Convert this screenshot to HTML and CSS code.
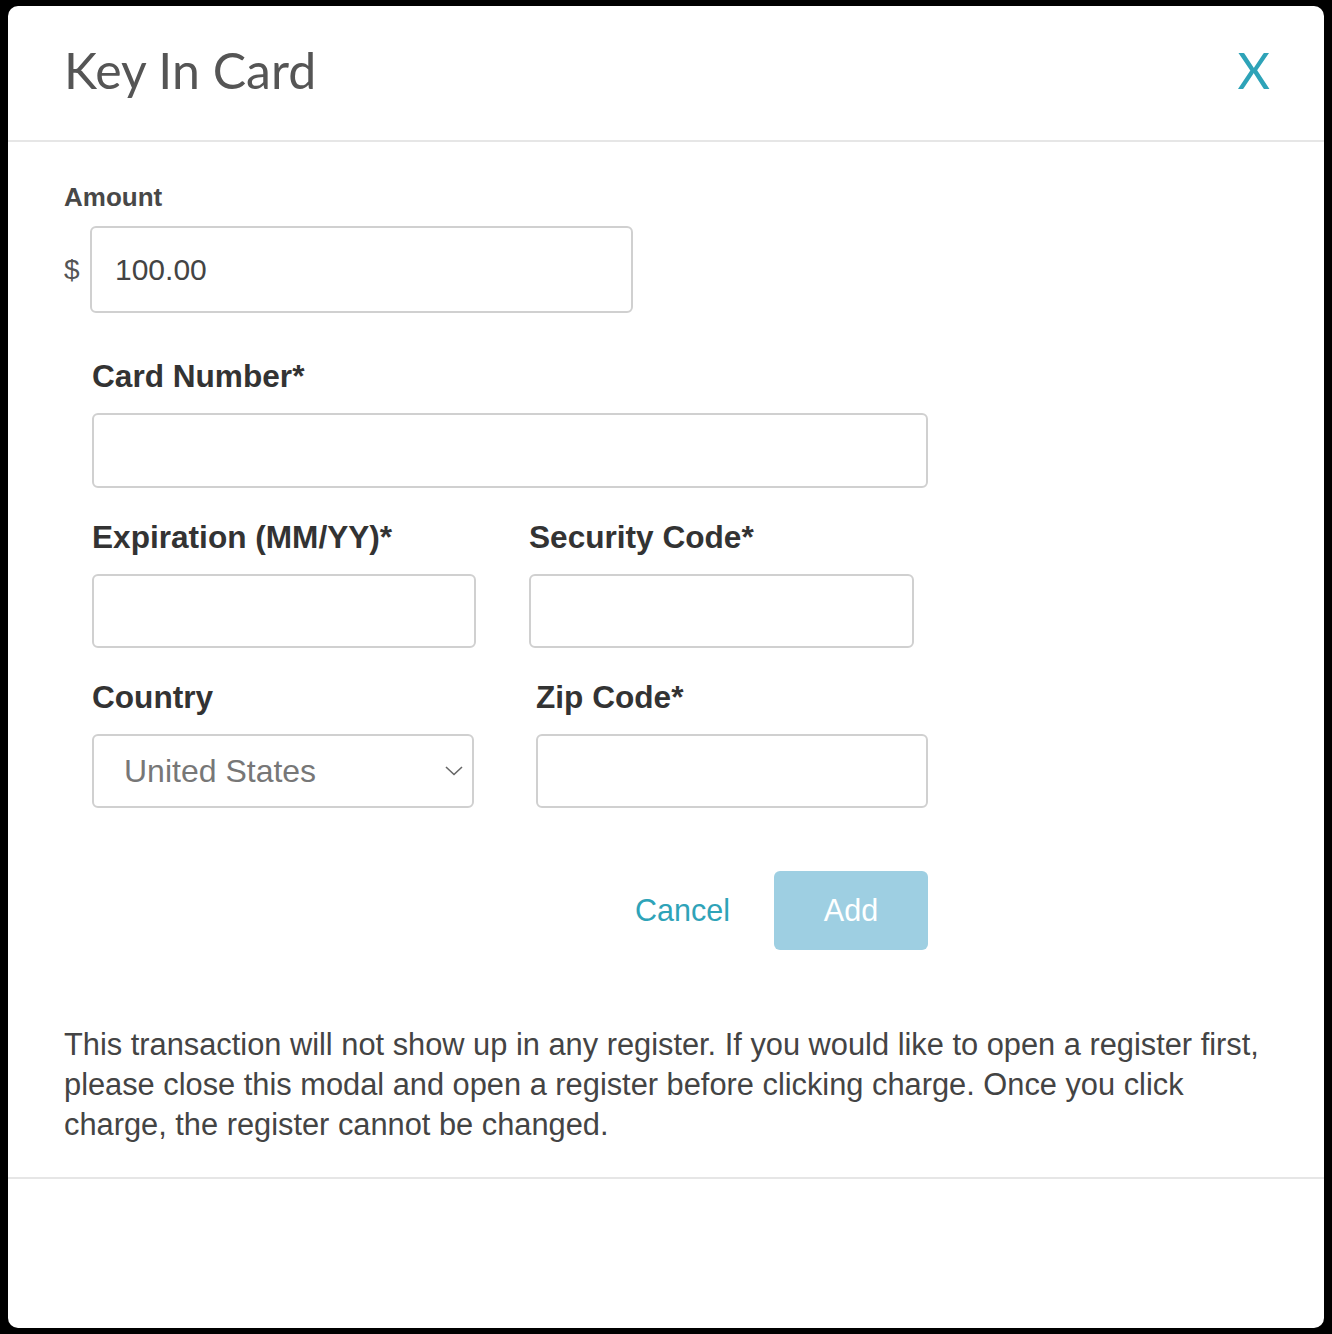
FILE: index.html
```html
<!DOCTYPE html>
<html>
<head>
<meta charset="utf-8">
<link rel="stylesheet" href="styles.css">
</head>
<body>
<div class="modal">
  <div class="modal-header">
    <h1 class="title">Key In Card</h1>
    <span class="close">X</span>
  </div>
  <div class="modal-body">
    <div class="amount-label">Amount</div>
    <div class="amount-row">
      <span class="dollar">$</span>
      <div class="input amount-input">100.00</div>
    </div>
    <div class="card-form">
      <div class="field">
        <div class="label">Card Number*</div>
        <div class="input card-input"></div>
      </div>
      <div class="row">
        <div class="field exp">
          <div class="label">Expiration (MM/YY)*</div>
          <div class="input exp-input"></div>
        </div>
        <div class="field sec">
          <div class="label">Security Code*</div>
          <div class="input sec-input"></div>
        </div>
      </div>
      <div class="row">
        <div class="field country">
          <div class="label">Country</div>
          <div class="input select">
            <span>United States</span>
            <svg class="chev" width="18" height="10" viewBox="0 0 18 10"><path d="M1 1 L9 8.5 L17 1" fill="none" stroke="#666" stroke-width="1.6"/></svg>
          </div>
        </div>
        <div class="field zip">
          <div class="label">Zip Code*</div>
          <div class="input zip-input"></div>
        </div>
      </div>
      <div class="actions">
        <span class="cancel">Cancel</span>
        <span class="add">Add</span>
      </div>
    </div>
    <p class="note">This transaction will not show up in any register. If you would like to open a register first, please close this modal and open a register before clicking charge. Once you click charge, the register cannot be changed.</p>
  </div>
</div>
</body>
</html>
```
FILE: styles.css
```css
html, body {
  margin: 0;
  padding: 0;
  background: #000;
}
body {
  padding: 6px 8px 6px 8px;
  font-family: "Liberation Sans", Arial, sans-serif;
}
.modal {
  background: #fff;
  border-radius: 10px;
  height: 1322px;
  overflow: hidden;
}
.modal-header {
  box-sizing: border-box;
  height: 136px;
  border-bottom: 2px solid #e6e6e6;
  display: flex;
  align-items: center;
  justify-content: space-between;
  padding: 0 54px 6px 56px;
}
.title {
  margin: 0;
  font-family: Lato, sans-serif;
  font-weight: 400;
  font-size: 50px;
  color: #555;
}
.close {
  font-family: Lato, sans-serif;
  font-size: 50px;
  color: #2ea3b8;
}
.modal-body {
  padding: 40px 56px 0 56px;
  border-bottom: 2px solid #e6e6e6;
}
.amount-label {
  font-size: 26px;
  font-weight: bold;
  color: #484848;
  height: 30px;
  line-height: 30px;
}
.amount-row {
  display: flex;
  align-items: center;
  margin-top: 14px;
}
.dollar {
  font-size: 28px;
  color: #555;
  width: 26px;
}
.input {
  box-sizing: border-box;
  border: 2px solid #d0d0d0;
  border-radius: 6px;
  background: #fff;
}
.amount-input {
  width: 543px;
  height: 87px;
  display: flex;
  align-items: center;
  padding-left: 23px;
  font-size: 30px;
  color: #444;
}
.card-form {
  padding-left: 28px;
  width: 836px;
  margin-top: 45px;
}
.label {
  font-size: 31.6px;
  font-weight: bold;
  color: #333;
  height: 36px;
  line-height: 36px;
}
.field .input {
  margin-top: 19px;
  height: 75px;
}
.row .field .input {
  height: 74px;
}
.card-input {
  width: 836px;
}
.row {
  display: flex;
  margin-top: 31px;
}
.exp {
  width: 437px;
}
.exp-input {
  width: 384px;
}
.sec-input {
  width: 385px;
}
.country {
  width: 444px;
}
.select {
  width: 382px;
  display: flex;
  align-items: center;
  justify-content: space-between;
  padding: 0 9px 0 30px;
  font-size: 32px;
  color: #777;
}
.zip-input {
  width: 392px;
}
.actions {
  display: flex;
  justify-content: flex-end;
  align-items: center;
  margin-top: 63px;
  gap: 44px;
}
.cancel {
  font-size: 30.5px;
  color: #2ea3b8;
}
.add {
  width: 154px;
  height: 79px;
  border-radius: 6px;
  background: #9ecfe2;
  color: #fff;
  font-size: 30.5px;
  display: flex;
  align-items: center;
  justify-content: center;
}
.note {
  margin: 75px 0 0 0;
  padding-bottom: 32px;
  font-size: 30.8px;
  line-height: 40px;
  color: #444;
}
```
